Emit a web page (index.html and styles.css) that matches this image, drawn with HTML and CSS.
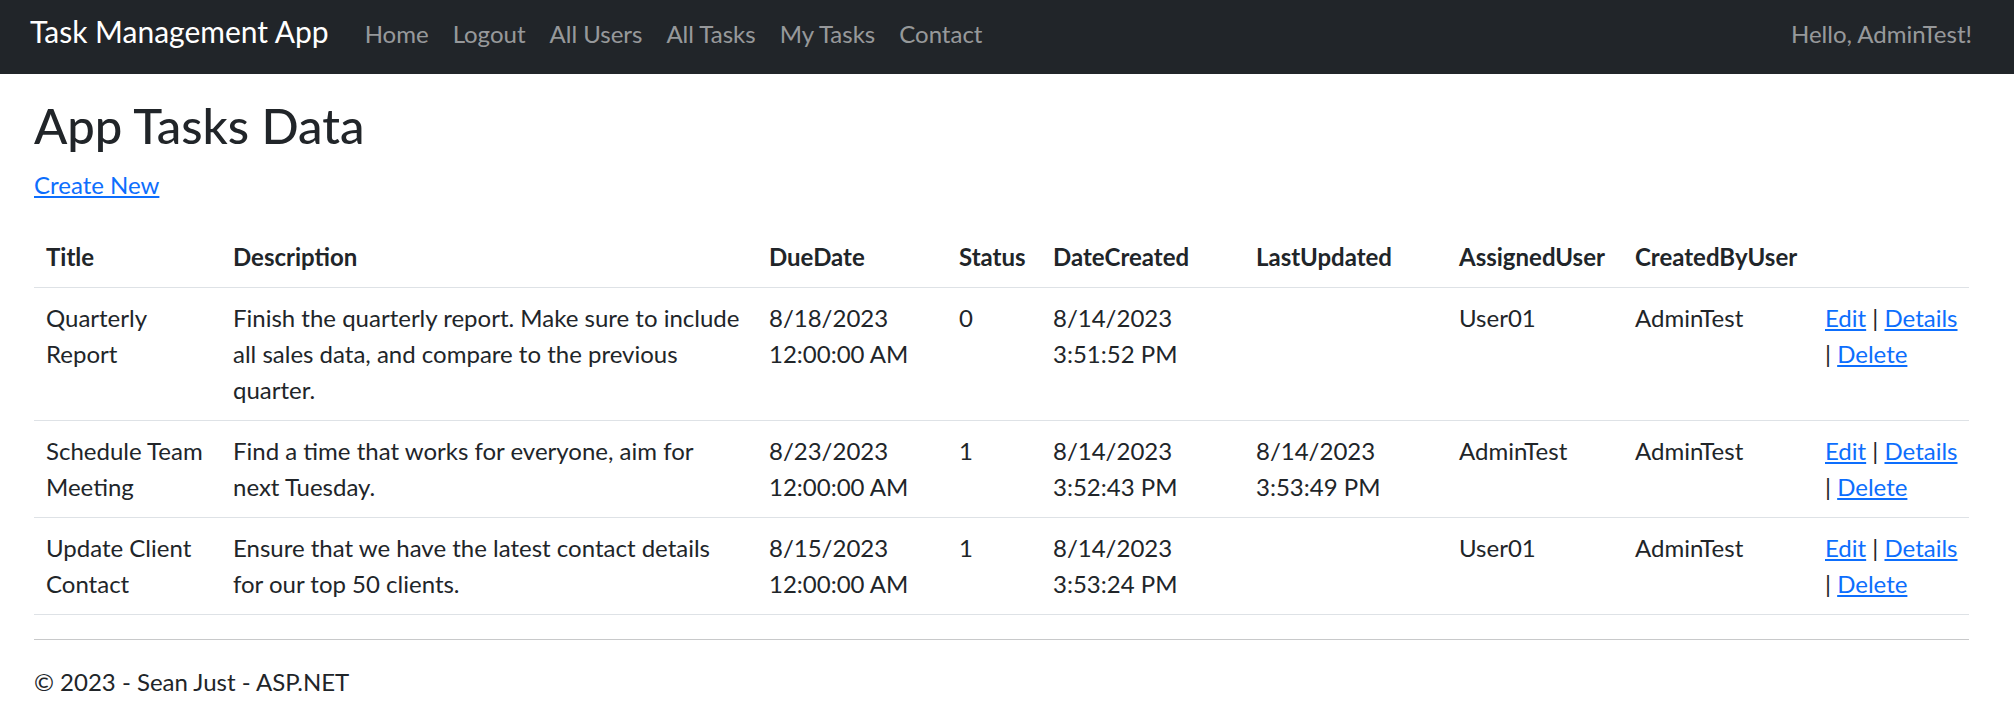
FILE: index.html
```html
<!DOCTYPE html>
<html lang="en">
<head>
<meta charset="utf-8">
<title>App Tasks Data - Task Management App</title>
<link rel="stylesheet" href="styles.css">
</head>
<body>
<header>
  <nav class="navbar">
    <a class="brand" href="#">Task Management App</a>
    <ul class="nav-links">
      <li><a href="#">Home</a></li>
      <li><a href="#">Logout</a></li>
      <li><a href="#">All Users</a></li>
      <li><a href="#">All Tasks</a></li>
      <li><a href="#">My Tasks</a></li>
      <li><a href="#">Contact</a></li>
    </ul>
    <span class="greeting">Hello, AdminTest!</span>
  </nav>
</header>
<div class="container">
  <main>
    <h1>App Tasks Data</h1>
    <p class="create"><a href="#">Create New</a></p>
    <table class="table">
      <thead>
        <tr>
          <th class="c-title">Title</th>
          <th class="c-desc">Description</th>
          <th class="c-due">DueDate</th>
          <th class="c-status">Status</th>
          <th class="c-created">DateCreated</th>
          <th class="c-updated">LastUpdated</th>
          <th class="c-assigned">AssignedUser</th>
          <th class="c-createdby">CreatedByUser</th>
          <th class="c-actions"></th>
        </tr>
      </thead>
      <tbody>
        <tr>
          <td>Quarterly Report</td>
          <td>Finish the quarterly report. Make sure to include all sales data, and compare to the previous quarter.</td>
          <td>8/18/2023 12:00:00 AM</td>
          <td>0</td>
          <td>8/14/2023 3:51:52 PM</td>
          <td></td>
          <td>User01</td>
          <td>AdminTest</td>
          <td><span class="nowrap"><a href="#">Edit</a> | <a href="#">Details</a></span> <span class="nowrap">| <a href="#">Delete</a></span></td>
        </tr>
        <tr>
          <td>Schedule Team Meeting</td>
          <td>Find a time that works for everyone, aim for next Tuesday.</td>
          <td>8/23/2023 12:00:00 AM</td>
          <td>1</td>
          <td>8/14/2023 3:52:43 PM</td>
          <td>8/14/2023 3:53:49 PM</td>
          <td>AdminTest</td>
          <td>AdminTest</td>
          <td><span class="nowrap"><a href="#">Edit</a> | <a href="#">Details</a></span> <span class="nowrap">| <a href="#">Delete</a></span></td>
        </tr>
        <tr>
          <td>Update Client Contact</td>
          <td>Ensure that we have the latest contact details for our top 50 clients.</td>
          <td>8/15/2023 12:00:00 AM</td>
          <td>1</td>
          <td>8/14/2023 3:53:24 PM</td>
          <td></td>
          <td>User01</td>
          <td>AdminTest</td>
          <td><span class="nowrap"><a href="#">Edit</a> | <a href="#">Details</a></span> <span class="nowrap">| <a href="#">Delete</a></span></td>
        </tr>
      </tbody>
    </table>
  </main>
  <hr>
  <footer>
    <p>&copy; 2023 - Sean Just - ASP.NET</p>
  </footer>
</div>
</body>
</html>
```

FILE: styles.css
```css
* {
  box-sizing: border-box;
}

html,
body {
  margin: 0;
}

body {
  font-family: Lato, "Open Sans", sans-serif;
  font-size: 24px;
  line-height: 1.5;
  color: #212529;
  background: #fff;
}

a {
  color: #0d6efd;
}

.navbar {
  display: flex;
  align-items: baseline;
  height: 74px;
  padding: 9px 30px 0 30px;
  background: #212529;
}

.brand {
  font-size: 30px;
  line-height: 1.5;
  color: #fff;
  text-decoration: none;
  margin-right: 24px;
}

.nav-links {
  display: flex;
  align-items: baseline;
  list-style: none;
  margin: 0;
  padding: 0;
}

.nav-links a {
  display: block;
  padding: 0 12px;
  line-height: 36px;
  color: rgba(255, 255, 255, 0.55);
  text-decoration: none;
}

.greeting {
  margin-left: auto;
  padding: 0 12px;
  line-height: 36px;
  color: rgba(255, 255, 255, 0.55);
}

.container {
  margin-left: 34px;
  width: 1935px;
  padding-top: 21px;
}

h1 {
  margin: 0 0 12px;
  font-size: 49px;
  font-weight: 500;
  line-height: 60px;
}

.create {
  margin: 0 0 24px;
}

.table {
  width: 100%;
  border-collapse: collapse;
  table-layout: fixed;
  margin-bottom: 24px;
}

.table th,
.table td {
  padding: 12px;
  text-align: left;
  vertical-align: top;
  border-bottom: 1px solid #dee2e6;
}

.table th {
  font-weight: 700;
  white-space: nowrap;
}

.c-title { width: 187px; }
.c-desc { width: 536px; }
.c-due { width: 190px; }
.c-status { width: 94px; }
.c-created { width: 203px; }
.c-updated { width: 203px; }
.c-assigned { width: 176px; }
.c-createdby { width: 190px; }

.nowrap {
  white-space: nowrap;
}

hr {
  margin: 24px 0;
  border: 0;
  border-top: 1px solid #c8c9ca;
}

footer p {
  margin: 0 0 16px;
}
```
